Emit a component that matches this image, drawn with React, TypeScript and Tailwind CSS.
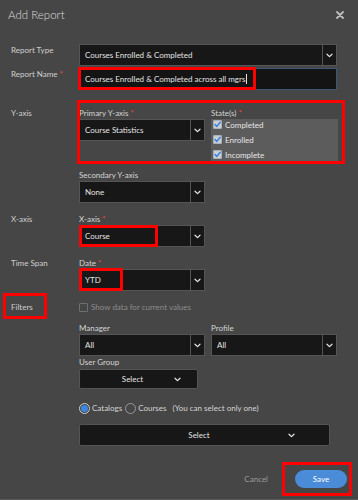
import React from "react";

// 小さなシェブロン（ドロップダウン用）
function Chevron() {
  return (
    <svg width="7" height="5" viewBox="0 0 7 5" fill="none">
      <path d="M1 1.2L3.5 3.6L6 1.2" stroke="#e8e8e8" strokeWidth="1.2" strokeLinecap="round" strokeLinejoin="round" />
    </svg>
  );
}

function Req() {
  return <span className="text-[#e5484d] ml-[2px]">*</span>;
}

function Dropdown({ value, className = "" }: { value: string; className?: string }) {
  return (
    <div className={`flex h-[22px] bg-[#171717] border border-[#545454] ${className}`}>
      <div className="flex-1 flex items-center pl-[5px] text-[#e4e4e4]">{value}</div>
      <div className="w-[14px] border-l border-[#545454] flex items-center justify-center">
        <Chevron />
      </div>
    </div>
  );
}

function CenterSelect({ className = "", pl, pr }: { className?: string; pl: string; pr: string }) {
  return (
    <div className={`flex items-center bg-[#171717] border border-[#545454] rounded-[2px] ${className} ${pr}`}>
      <div className={`flex-1 text-center text-[#e4e4e4] ${pl}`}>Select</div>
      <Chevron />
    </div>
  );
}

function Check({ checked = false }: { checked?: boolean }) {
  return (
    <span
      className={`w-[9px] h-[9px] flex items-center justify-center rounded-[1px] border ${
        checked ? "border-[#a9b0b8] bg-[#c9ced4]" : "border-[#6f6f6f] bg-transparent"
      }`}
    >
      {checked && (
        <svg width="7" height="7" viewBox="0 0 7 7" fill="none">
          <path d="M1 3.6L2.8 5.4L6.2 1.3" stroke="#2f7fe0" strokeWidth="1.4" strokeLinecap="round" strokeLinejoin="round" />
        </svg>
      )}
    </span>
  );
}

function Row({ label, children, className = "" }: { label?: React.ReactNode; children: React.ReactNode; className?: string }) {
  return (
    <div className={`grid grid-cols-[79px_258px] ${className}`}>
      <div className="pl-[11px] h-[12px] leading-[12px] text-[#cfcfcf]">{label}</div>
      <div>{children}</div>
    </div>
  );
}

function FieldLabel({ children }: { children: React.ReactNode }) {
  return <div className="h-[12px] leading-[12px] text-[#d4d4d4]">{children}</div>;
}

export default function App() {
  const states = ["Completed", "Enrolled", "Incomplete"];

  return (
    <div className="relative w-[358px] h-[500px] bg-[#464646] font-[Lato,sans-serif] text-[8px] overflow-hidden">
      {/* ヘッダー */}
      <header className="flex items-start justify-between h-[44px] pl-[8px] pr-[14px] pt-[6px]">
        <h1 className="text-[11.5px] leading-[18px] text-[#dadada] font-light">Add Report</h1>
        <svg width="8" height="8" viewBox="0 0 8 8" className="mt-[5px]">
          <path d="M1 1L7 7M7 1L1 7" stroke="#bdbdbd" strokeWidth="1.8" strokeLinecap="round" />
        </svg>
      </header>

      <Row label="Report Type">
        <Dropdown value="Courses Enrolled & Completed" />
      </Row>

      <Row className="mt-[2px]" label={<>Report Name<Req /></>}>
        <div className="flex items-center h-[22px] bg-[#141414] border border-[#3c5877] pl-[5px] text-[#e4e4e4]">
          Courses Enrolled &amp; Completed across all mgrs
          <span className="w-px h-[10px] bg-[#e4e4e4] ml-[1px]" />
        </div>
      </Row>

      <Row className="mt-[17px]" label="Y-axis">
        <div className="grid grid-cols-[126px_127px] gap-x-[6px]">
          <div>
            <FieldLabel>Primary Y-axis<Req /></FieldLabel>
            <Dropdown value="Course Statistics" />
          </div>
          <div>
            <FieldLabel>State(s)<Req /></FieldLabel>
            <div className="h-[44px] bg-[#5c5c5c] flex flex-col gap-[4px] pl-[2px]">
              {states.map((s) => (
                <div key={s} className="flex items-center gap-[3px] h-[11px] text-[#e6e6e6]">
                  <Check checked />
                  {s}
                </div>
              ))}
            </div>
          </div>
        </div>
        <div className="mt-[6px] w-[126px]">
          <FieldLabel>Secondary Y-axis</FieldLabel>
          <Dropdown value="None" />
        </div>
      </Row>

      <Row className="mt-[10px]" label="X-axis">
        <div className="w-[126px]">
          <FieldLabel>X-axis<Req /></FieldLabel>
          <Dropdown value="Course" />
        </div>
      </Row>

      <Row className="mt-[10px]" label="Time Span">
        <div className="w-[126px]">
          <FieldLabel>Date<Req /></FieldLabel>
          <Dropdown value="YTD" />
        </div>
      </Row>

      <Row className="mt-[10px]" label="Filters">
        <div className="flex items-center gap-[3px] h-[12px] text-[#8c8c8c]">
          <Check />
          Show data for current values
        </div>
        <div className="mt-[9px] grid grid-cols-[126px_126px] gap-x-[6px]">
          <div>
            <FieldLabel>Manager</FieldLabel>
            <Dropdown value="All" />
          </div>
          <div>
            <FieldLabel>Profile</FieldLabel>
            <Dropdown value="All" />
          </div>
        </div>
        <FieldLabel>User Group</FieldLabel>
        <CenterSelect className="mt-[1px] w-[119px] h-[20px]" pl="pl-[11px]" pr="pr-[16px]" />

        {/* カタログ / コース選択 */}
        <div className="mt-[13px] flex items-center h-[12px] text-[#d4d4d4]">
          <span className="w-[11px] h-[11px] rounded-full border border-[#cfcfcf] flex items-center justify-center">
            <span className="w-[7px] h-[7px] rounded-full bg-[#3d86e0]" />
          </span>
          <span className="ml-[2px]">Catalogs</span>
          <span className="ml-[3px] w-[11px] h-[11px] rounded-full border border-[#9a9a9a]" />
          <span className="ml-[2px]">Courses</span>
          <span className="ml-[6px]">(You can select only one)</span>
        </div>
        <CenterSelect className="mt-[10px] w-[251px] h-[22px]" pl="pl-[30px]" pr="pr-[34px]" />
      </Row>

      {/* フッター */}
      <footer className="mt-[24px] flex items-center justify-end pr-[11px] gap-[27px]">
        <span className="text-[#9b9b9b]">Cancel</span>
        <button className="w-[52px] h-[18px] rounded-full bg-[#4a8cd8] text-white">Save</button>
      </footer>
      <div className="absolute left-0 right-0 bottom-0 h-px bg-[#5a5a5a]" />

      {/* 赤い注釈枠 */}
      <div className="absolute left-[78px] top-[67px] w-[178px] h-[23px] border-[3px] border-[#ff0000]" />
      <div className="absolute left-[77px] top-[100px] w-[268px] h-[64px] border-[3px] border-[#ff0000]" />
      <div className="absolute left-[79px] top-[225px] w-[79px] h-[22px] border-[3px] border-[#ff0000]" />
      <div className="absolute left-[79px] top-[268px] w-[44px] h-[23px] border-[3px] border-[#ff0000]" />
      <div className="absolute left-[3px] top-[293px] w-[44px] h-[26px] border-[3px] border-[#ff0000]" />
      <div className="absolute left-[282px] top-[462px] w-[70px] h-[34px] border-[3px] border-[#ff0000]" />
    </div>
  );
}
